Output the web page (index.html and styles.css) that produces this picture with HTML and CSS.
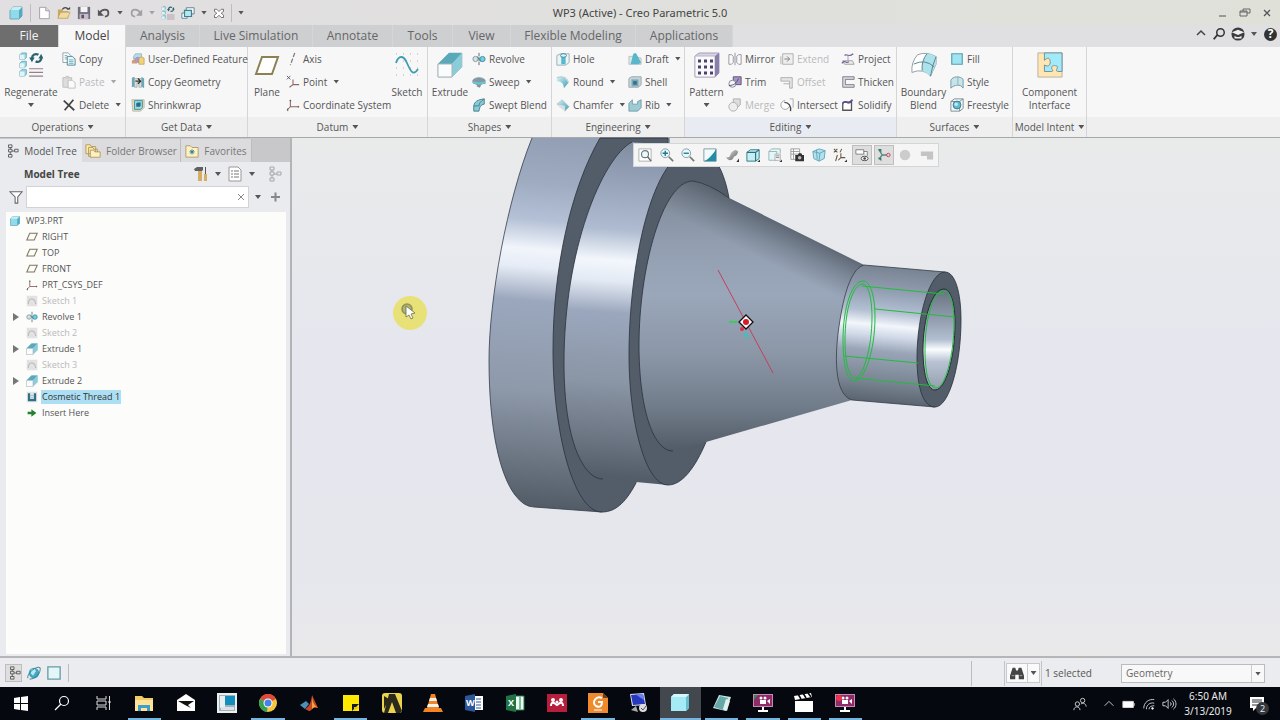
FILE: index.html
```html
<!DOCTYPE html>
<html lang="en">
<head>
<meta charset="utf-8">
<title>WP3 (Active) - Creo Parametric 5.0</title>
<link rel="stylesheet" href="styles.css">
</head>
<body>
<svg class="sprite" aria-hidden="true">
<defs>
<linearGradient id="teal" x1="0" y1="0" x2="1" y2="1"><stop offset="0" stop-color="#d5f3f8"/><stop offset="1" stop-color="#3d9db3"/></linearGradient>
<linearGradient id="brush" x1="0" y1="0" x2="1" y2="1"><stop offset="0" stop-color="#eee"/><stop offset="1" stop-color="#555"/></linearGradient>
<symbol id="cube" viewBox="0 0 16 16"><path d="M2 5 5 2h9v9l-3 3H2z" fill="#8fdbeb" stroke="#72a9b7"/><path d="M11 5l3-3v9l-3 3z" fill="#55a9bf"/><path d="M2 5l3-3h9l-3 3z" fill="#c7eef5"/></symbol>
<symbol id="new" viewBox="0 0 16 16"><path d="M3 1.500h7l4 4v9H3z" fill="#fff" stroke="#999"/><path d="M10 1.500v4h4" fill="#ddd" stroke="#999"/></symbol>
<symbol id="open" viewBox="0 0 16 16"><path d="M1 4h5l1 2h6v8H1z" fill="#c9a860"/><path d="M1 14l3-7h11l-3 7z" fill="#f1dba0" stroke="#b59855" stroke-width=".7"/><path d="M6 4c2-3 5-3 7 0" fill="none" stroke="#444" stroke-width="1.500"/><path d="M11 4h4V1z" fill="#444"/></symbol>
<symbol id="save" viewBox="0 0 16 16"><path d="M1 1h14v14H1z" fill="#706d7d"/><path d="M4 1h8v6H4z" fill="#f4f4f6"/><path d="M3 9h10v6H3z" fill="#cbb9cf"/><path d="M5 10h3v4H5z" fill="#555"/></symbol>
<symbol id="undo" viewBox="0 0 16 16"><path d="M3 8c3-5 10-5 10 0 0 2-1 4-4 4" fill="none" stroke="currentColor" stroke-width="2"/><path d="M1 4v7h7z" fill="currentColor"/></symbol>
<symbol id="regen" viewBox="0 0 26 28"><g fill="#8fd7e5" stroke="#6b9caa" stroke-width=".8"><path d="M1 3l2-2h5v5L6 8H1zM1 12l2-2h5v5l-2 2H1zM1 21l2-2h5v5l-2 2H1z"/></g><path d="M1 3h5v5H1zM1 12h5v5H1zM1 21h5v5H1z" fill="#dff5f8"/><path d="M14 7c0-4 4-6 7-4M24 5c1 4-3 7-6 5" fill="none" stroke="#2b6470" stroke-width="2.400"/><path d="M11 6h6l-3 5zM21 7h5l-2-5z" fill="#2b6470"/><path d="M11 18h15M11 22h15M11 26h15" stroke="#97808c" stroke-width="1.200"/></symbol>
<symbol id="windows" viewBox="0 0 16 16"><path d="M6 2h9v7H6zM1 8h6v6H1z" fill="#fff" stroke="#4b7e8c"/><path d="M4 5h8v7H4z" fill="#b6e7ef" stroke="#43808f" stroke-width="1.400"/></symbol>
<symbol id="closewin" viewBox="0 0 16 16"><path d="M2 3h3l3 3 3-3h3v3l-3 2 3 3v3h-3l-3-3-3 3H2v-3l3-3-3-2z" fill="#fff" stroke="#666" stroke-width="1.200"/></symbol>
<symbol id="copy" viewBox="0 0 16 16"><path d="M1 1h6l3 3v8H1z" fill="#fff" stroke="#8b9aa0"/><path d="M6 5h6l3 3v7H6z" fill="#e3f6fa" stroke="#4b7f8d"/><path d="M3 4h3M3 6h3M3 8h3M8 9h5M8 11h5M8 13h5" stroke="#5796a5" stroke-width=".8"/></symbol>
<symbol id="paste" viewBox="0 0 16 16"><path d="M1 3h10v11H1z" fill="#ddd" stroke="#bbb"/><path d="M4 1h4v3H4z" fill="#ccc"/><path d="M7 6h5l3 3v6H7z" fill="#fafafa" stroke="#bbb"/></symbol>
<symbol id="delete" viewBox="0 0 16 16"><path d="M2 3l12 11M13 2L3 14" stroke="#444" stroke-width="2" fill="none"/></symbol>
<symbol id="udf" viewBox="0 0 16 16"><path d="M3 5l2-3h7v6H3z" fill="#b6dceb" stroke="#71a5b8" stroke-width=".7"/><path d="M1 10l6-4v7H1z" fill="#d79b6d"/><circle cx="8" cy="9" r="3.500" fill="#ad98ca"/><path d="M9 12V7q3-3 6 0v7H9z" fill="#eed47b" stroke="#b29344" stroke-width=".7"/></symbol>
<symbol id="geom" viewBox="0 0 16 16"><path d="M1 3l3-1v11l-3 1zM12 2l3 2v11l-3-2z" fill="#68a9b4"/><path d="M4 4h8v10H9V9H7v5H4z" fill="#d8dddf" stroke="#8b999d" stroke-width=".7"/><path d="M5 7h5M8 4l3 3-3 3" stroke="#333" stroke-width="1.500" fill="none"/></symbol>
<symbol id="shrink" viewBox="0 0 16 16"><path d="M1 2h14v9l-4 4H2z" fill="#f2dd9c" stroke="#a7bac0"/><path d="M4 3h9v8l-2 2H4z" fill="#9bd8e6" stroke="#3b8ca0"/><path d="M6 6l2-1h3v4l-1 1H6z" fill="#256c82"/></symbol>
<symbol id="plane" viewBox="0 0 26 26"><path d="M8 5h16l-6 17H2z" fill="#fff" stroke="#8c8154" stroke-width="2"/></symbol>
<symbol id="axis" viewBox="0 0 16 16"><path d="M10 1L5 15" stroke="#777" stroke-width="1.400" stroke-dasharray="5 2"/></symbol>
<symbol id="csys" viewBox="0 0 16 16"><path d="M5 2v8h10M5 10l-4 4" fill="none" stroke="#8c6660" stroke-width="1.200"/><path d="M4 3h2M14 9v2M2 12v3" stroke="#555"/></symbol>
<symbol id="point" viewBox="0 0 16 16"><path d="M1 1l4 4M5 1L1 5" stroke="#555"/><path d="M8 5v6h7M8 11l-4 3" fill="none" stroke="#8c6660" stroke-width="1.200"/></symbol>
<symbol id="sketch" viewBox="0 0 26 26"><path d="M2 2h23M2 9h23M2 16h23M2 23h23" stroke="#c9a4a4" stroke-dasharray="1 6"/><path d="M2 11C5 2 10 4 13 11s6 14 11 6" fill="none" stroke="#3d9eb2" stroke-width="1.800"/></symbol>
<symbol id="extrude" viewBox="0 0 26 26"><path d="M1 12L12 1h13v14L15 25H1z" fill="#b9e1e9" stroke="#9fb7bd" stroke-width=".7"/><path d="M12 1h13L15 12H1z" fill="#59a9bb"/><path d="M25 1v14L15 25V12z" fill="#8ccbd8"/><path d="M1 12h14v13H1z" fill="#fbfcfc" stroke="#a8b5b9"/></symbol>
<symbol id="revolve" viewBox="0 0 16 16"><circle cx="4" cy="8" r="3" fill="#d4e0e2" stroke="#81969d"/><circle cx="12" cy="8" r="3" fill="#71cfe2" stroke="#3a889c"/><path d="M8 1v14" stroke="#555" stroke-dasharray="4 1"/><path d="M6 5l4 6" stroke="#32899f"/></symbol>
<symbol id="sweep" viewBox="0 0 16 16"><path d="M1 6c2-4 12-4 14 0v4c-3-1-5 0-6 4l-3-1v-2l-5-2z" fill="#809ba2" stroke="#6c858e" stroke-width=".7"/><path d="M1 7c4 1 9 2 14 0v2c-4 3-8 2-14 0z" fill="#6bc4d4"/></symbol>
<symbol id="blend" viewBox="0 0 16 16"><path d="M2 15V9c1-5 4-7 12-8v6c-4 1-5 2-6 8z" fill="#8acbd8" stroke="#427986"/><path d="M2 9h6c0-3 2-5 6-8" stroke="#427986" fill="none"/></symbol>
<symbol id="hole" viewBox="0 0 16 16"><path d="M1 4l4-2h10v10l-4 3H1z" fill="#eef4f5" stroke="#91abb2"/><path d="M6 4h5v10H6z" fill="#55bad0"/><ellipse cx="8.500" cy="4" rx="3.500" ry="2" fill="#d8f5fa" stroke="#397f91"/></symbol>
<symbol id="round" viewBox="0 0 16 16"><path d="M1 3c7-2 11 1 13 6l-5 6c0-5-3-8-8-8z" fill="url(#teal)"/><path d="M1 3l4-1c6 0 9 3 9 7" fill="none" stroke="#aebdc0"/></symbol>
<symbol id="chamfer" viewBox="0 0 16 16"><path d="M1 7l6-5 8 8-5 5V9z" fill="url(#teal)" stroke="#a6bfc3" stroke-width=".7"/><path d="M1 8l9 1v6" fill="#d9dfe1"/></symbol>
<symbol id="draft" viewBox="0 0 16 16"><path d="M1 5h7l7 2v7H1z" fill="#dfe7e8" stroke="#9babae" stroke-width=".7"/><path d="M6 2l3-1 6 11-3 2H3z" fill="#59b6cb"/></symbol>
<symbol id="shell" viewBox="0 0 16 16"><path d="M1 4l3-2h11v9l-3 3H1z" fill="#c6d4d8" stroke="#94a5ab"/><path d="M4 5h8v8H4z" fill="#78a8b7"/><path d="M6 7h4v4H6z" fill="#2f718b"/></symbol>
<symbol id="rib" viewBox="0 0 16 16"><path d="M1 6l4-4v5h6V4l4-2v9l-4 4H1z" fill="#9fcbd4" stroke="#598e9b" stroke-width=".8"/></symbol>
<symbol id="pattern" viewBox="0 0 26 26"><path d="M1 4l4-3h20v20l-4 4H1z" fill="#d8d3e4" stroke="#a59fb8"/><path d="M1 4h20v21H1z" fill="#faf9fc" stroke="#bbb6c6"/><path d="M21 4l4-3v20l-4 4z" fill="#8a7eaa"/><path d="M4 9h15M4 15h15M4 21h15" stroke="#4a426c" stroke-width="3" stroke-dasharray="3 3"/></symbol>
<symbol id="mirror" viewBox="0 0 16 16"><path d="M1 3h3l2 2v7l-2 2H1zM15 3h-3l-2 2v7l2 2h3zM8 1v14" fill="#fafafa" stroke="#8f8d96"/></symbol>
<symbol id="trim" viewBox="0 0 16 16"><path d="M6 2h9v9H6z" fill="#a493c6" stroke="#594e70"/><circle cx="5" cy="10" r="4" fill="#f7f7fa" stroke="#817c8b"/><path d="M1 12c6 0 9-3 11-8" fill="none" stroke="#51416f"/></symbol>
<symbol id="merge" viewBox="0 0 16 16"><path d="M6 1h8v7l-5 4H6z" fill="#ddd" stroke="#aaa"/><circle cx="6" cy="10" r="5" fill="#eee" stroke="#aaa"/></symbol>
<symbol id="extend" viewBox="0 0 16 16"><path d="M3 2h12v12H3zM1 5v9" fill="#eee" stroke="#aaa"/><path d="M5 8h6M8 5l3 3-3 3" fill="none" stroke="#777"/></symbol>
<symbol id="offset" viewBox="0 0 16 16"><path d="M1 3h13v12h-3V7H1zM4 10h7" fill="#e5e5e5" stroke="#aaa"/></symbol>
<symbol id="intersect" viewBox="0 0 16 16"><path d="M11 1h4v10" fill="none" stroke="#aaa"/><path d="M6 3a5 5 0 1 0 5 5" fill="#fff" stroke="#999"/><path d="M5 5c5 0 8 4 7 10" fill="none" stroke="#494255" stroke-width="1.500"/></symbol>
<symbol id="project" viewBox="0 0 16 16"><path d="M2 10h11l2 4H4z" fill="#eee" stroke="#999"/><path d="M1 13c3-5 5 1 8-2M4 4c2-3 4 3 10-2" fill="none" stroke="#725a98" stroke-width="1.300"/><path d="M8 4v6" stroke="#999"/></symbol>
<symbol id="thicken" viewBox="0 0 16 16"><path d="M15 2H2v12h13v-3H5V5h10z" fill="#ddd9e3" stroke="#77737c"/></symbol>
<symbol id="solidify" viewBox="0 0 16 16"><path d="M2 14V6c3-5 7 3 10-2v10z" fill="#fff" stroke="#555" stroke-width="1.500"/><path d="M2 6c3-5 7 3 11-4" fill="none" stroke="#62488c" stroke-width="2"/></symbol>
<symbol id="boundary" viewBox="0 0 28 28"><path d="M7 3Q17-1 27 5L27 13 21 26Q13 17 1 22 0 11 7 3z" fill="#fff" stroke="#8a9ba0"/><path d="M17 2Q23 2 27 5L27 13 21 26 12 20Q11 10 17 2z" fill="#aee2eb"/><path d="M3 13q12-6 22 3M17 2Q11 10 12 20M27 5Q23 14 21 26" fill="none" stroke="#54818d"/></symbol>
<symbol id="fill" viewBox="0 0 16 16"><path d="M2 2h12v12H2z" fill="#a1e4f1" stroke="#529fae" stroke-width="1.300"/></symbol>
<symbol id="style" viewBox="0 0 16 16"><path d="M1 6c2-5 11-5 14-1v10c-3-5-10-4-14 0z" fill="#c7e4eb" stroke="#6b929e"/><path d="M9 2v9" stroke="#88aeb8"/></symbol>
<symbol id="freestyle" viewBox="0 0 16 16"><path d="M1 4l4-3h10v11l-4 3H1zM1 4h10v11M11 4l4-3" fill="none" stroke="#76868b"/><circle cx="8" cy="8" r="4.500" fill="#65bace" stroke="#30798e"/><circle cx="7" cy="7" r="2" fill="#bdeaf2"/></symbol>
<symbol id="component" viewBox="0 0 28 28"><path d="M1 1h26v26H1z" fill="#ffe6b2" stroke="#b8afa0"/><path d="M8 1h19v20h-5c-3-1 2-5-1-6s-6 0-5 3c1 2 2 3-1 3H8v-7c5 3 7-1 6-5s-4-2-6 0z" fill="#a2eafa" stroke="#718d93"/></symbol>
<symbol id="search" viewBox="0 0 16 16"><circle cx="10" cy="6" r="5" fill="none" stroke="currentColor" stroke-width="2"/><path d="M6 9l-5 6" stroke="currentColor" stroke-width="2.500"/></symbol>
<symbol id="cap" viewBox="0 0 16 16"><circle cx="8" cy="8" r="7.500" fill="#3c3c3c"/><path d="M1 6l7-3 7 3-7 3zM4 10c2 2 6 2 8 0v3H4z" fill="#eee"/></symbol>
<symbol id="tree" viewBox="0 0 16 16"><path d="M4 1h4v3H4zM4 6h4v3H4zM4 12h4v3H4zM11 6h4v3h-4zM6 4v2M6 9v3M8 8h3" fill="none" stroke="currentColor"/></symbol>
<symbol id="folders" viewBox="0 0 18 16"><path d="M1 1h5l1 2h5v8H1zM4 4h5l1 2h4v8H4z" fill="#ffe8a6" stroke="#ae975f"/><path d="M6 7h4l1 2h6v6H6z" fill="#fff1c2" stroke="#ae975f"/></symbol>
<symbol id="favorite" viewBox="0 0 16 16"><path d="M1 2h5l2 2h7v11H1z" fill="#fff1c2" stroke="#a5976e"/><path d="M8 6v6M5 9h6M6 7l4 4M10 7l-4 4" stroke="#27768a"/></symbol>
<symbol id="tools" viewBox="0 0 16 16"><path d="M5 4h4v11H5z" fill="#d5ad65"/><path d="M1 3l3-2h6v3L9 5H2z" fill="#606060"/><path d="M12 1h1v7h-1z" fill="#555"/><path d="M11 8h3v7h-3z" fill="#d5ad65"/></symbol>
<symbol id="list" viewBox="0 0 16 16"><path d="M2 1h9l3 3v11H2z" fill="#fff" stroke="#999"/><path d="M4 5h2M7 5h5M4 8h2M7 8h5M4 11h2M7 11h5" stroke="#777" stroke-width="1.200"/></symbol>
<symbol id="filter" viewBox="0 0 16 16"><path d="M1 2h14l-5 6v7H7V8z" fill="#fff" stroke="#666" stroke-width="1.200"/></symbol>
<symbol id="datum" viewBox="0 0 16 16"><path d="M5 3h10l-4 9H1z" fill="none" stroke="#7e7559" stroke-width="1.400"/></symbol>
<symbol id="sketchoff" viewBox="0 0 16 16"><path d="M1 1h14v14H1z" fill="#e2e2e2"/><path d="M3 12c0-9 9-9 10 0" fill="none" stroke="#bbb" stroke-width="1.500"/></symbol>
<symbol id="thread" viewBox="0 0 16 16"><path d="M1 1h14v14H1z" fill="#dfe6ea"/><path d="M4 3v9h8V3" fill="none" stroke="#316f83" stroke-width="3"/><path d="M6 6h4M6 9h4" stroke="#8ab7c5"/></symbol>
<symbol id="insert" viewBox="0 0 16 16"><path d="M1 6h6V2l8 6-8 6v-4H1z" fill="#23822d"/></symbol>
<symbol id="zoomin" viewBox="0 0 16 16"><circle cx="6" cy="6" r="5" fill="#e5fafd" stroke="#7f9296"/><path d="M10 10l5 5" stroke="#777" stroke-width="2"/><path d="M3 6h6M6 3v6" stroke="#1d7587" stroke-width="1.500"/></symbol>
<symbol id="zoomout" viewBox="0 0 16 16"><circle cx="6" cy="6" r="5" fill="#e5fafd" stroke="#7f9296"/><path d="M10 10l5 5" stroke="#777" stroke-width="2"/><path d="M3 6h6" stroke="#1d7587" stroke-width="1.500"/></symbol>
<symbol id="refit" viewBox="0 0 16 16"><path d="M1 1h14v14H1z" fill="#fff" stroke="#aaa"/><circle cx="8" cy="7" r="4" fill="#eef8fa" stroke="#667d84" stroke-width="1.300"/><path d="M11 10l4 5" stroke="#666" stroke-width="1.600"/></symbol>
<symbol id="repaint" viewBox="0 0 16 16"><path d="M1 1h14v14H1z" fill="#effcff" stroke="#829095"/><path d="M15 1v14H1c5-2 10-7 14-14z" fill="#238ba3"/></symbol>
<symbol id="render" viewBox="0 0 16 16"><path d="M1 10q4 2 5-2t6-6l3 2q-1 5-5 6-1 4-5 4-3-1-4-4z" fill="url(#brush)"/><path d="M16 12v4h-3z" fill="#333"/></symbol>
<symbol id="saved" viewBox="0 0 16 16"><path d="M1 5l4-3h10v10l-4 3H1z" fill="#c6eef4" stroke="#27707e"/><path d="M1 5h10v10M11 5l4-3" fill="none" stroke="#27707e" stroke-width="1.300"/><path d="M16 13v3h-3z" fill="#333"/></symbol>
<symbol id="views" viewBox="0 0 16 16"><path d="M1 4l3-3h10v5M1 4h9v10H1z" fill="#e4f6f8" stroke="#91b0b5"/><path d="M8 7h6v7H8z" fill="#fff" stroke="#aaa"/><path d="M9 9h4M9 11h4" stroke="#777"/><path d="M16 13v3h-3z" fill="#333"/></symbol>
<symbol id="camera" viewBox="0 0 16 16"><path d="M1 1h10v12H1zM1 4h10M1 7h10M4 1v12" fill="#fff" stroke="#999"/><path d="M6 8h3l1-2h3l1 2h2v7H6z" fill="#333"/><circle cx="11" cy="11" r="2" fill="#bbb"/></symbol>
<symbol id="section" viewBox="0 0 16 16"><path d="M1 4l7-3 7 2-1 9-6 3-6-3z" fill="#b1e1ef" stroke="#5fa1b5"/><path d="M1 4l8 2 6-3M9 6l-1 9M5 2l1 11" fill="none" stroke="#5fa1b5"/></symbol>
<symbol id="datums" viewBox="0 0 16 16"><path d="M1 1l4 4M5 1L1 5M10 1L8 5M5 8l-2 7M9 6v5h5M9 11l-3 3" fill="none" stroke="#67573f" stroke-width="1.200"/><path d="M16 13v3h-3z" fill="#333"/></symbol>
<symbol id="annot" viewBox="0 0 16 16"><path d="M1 2h9v5H1zM10 4h4v5" fill="#fff" stroke="#777"/><ellipse cx="11" cy="12" rx="4" ry="2.500" fill="#fff" stroke="#444"/><circle cx="11" cy="12" r="1.500" fill="#444"/></symbol>
<symbol id="spin" viewBox="0 0 16 16"><path d="M2 2l4 6-4 5M6 8h6" stroke="#56857d" stroke-width="1.500" fill="none"/><path d="M1 1h4v4zM1 11h4v4z" fill="#357b70"/><circle cx="13" cy="8" r="2" fill="#f0c6c8" stroke="#b34c57"/></symbol>
</defs>
</svg>

<header class="titlebar">
  <div class="quick">
    <svg class="i16"><use href="#cube"/></svg><span class="rule"></span>
    <button aria-label="New"><svg class="i14"><use href="#new"/></svg></button>
    <button aria-label="Open"><svg class="i14"><use href="#open"/></svg></button>
    <button aria-label="Save"><svg class="i14"><use href="#save"/></svg></button>
    <button aria-label="Undo"><svg class="i14"><use href="#undo"/></svg></button><i class="caret"></i>
    <button aria-label="Redo" class="faded"><svg class="i14 flip"><use href="#undo"/></svg></button><i class="caret faded"></i>
    <button aria-label="Regenerate"><svg class="i14"><use href="#regen"/></svg></button>
    <button aria-label="Windows"><svg class="i14"><use href="#windows"/></svg></button><i class="caret"></i>
    <button aria-label="Close window"><svg class="i12"><use href="#closewin"/></svg></button><span class="rule"></span>
    <button aria-label="Customize toolbar" class="customize"><i class="caret"></i></button>
  </div>
  <h1>WP3 (Active) - Creo Parametric 5.0</h1>
  <div class="winctl">
    <button aria-label="Minimize"><svg class="i12" viewBox="0 0 12 12"><path d="M2 9h7" stroke="#555"/></svg></button>
    <button aria-label="Restore"><svg class="i12" viewBox="0 0 12 12"><path d="M4 4V2h7v4H8M1 4h7v5H1zM1 5h7" fill="none" stroke="#666"/></svg></button>
    <button aria-label="Close"><svg class="i12" viewBox="0 0 12 12"><path d="M3 3l6 6M9 3L3 9" stroke="#555" stroke-width="1.300"/></svg></button>
  </div>
</header>

<nav class="tabs">
  <button class="file">File</button><button class="active">Model</button><button class="t-analysis">Analysis</button><button class="t-live">Live Simulation</button><button class="t-annotate">Annotate</button><button class="t-tools">Tools</button><button class="t-view">View</button><button class="t-flex">Flexible Modeling</button><button class="t-apps">Applications</button>
  <div class="help">
    <button aria-label="Collapse ribbon"><svg class="i12" viewBox="0 0 12 12"><path d="M2 7l4-4 4 4" fill="none" stroke="#444" stroke-width="1.500"/></svg></button>
    <button aria-label="Search commands"><svg class="i12"><use href="#search"/></svg></button>
    <button aria-label="Learning"><svg class="i14"><use href="#cap"/></svg></button><i class="caret"></i>
    <button aria-label="Help" class="qmark">?</button>
  </div>
</nav>

<section class="ribbon">
  <div class="group g-oper"><div class="cmds">
    <button class="big"><svg class="i26"><use href="#regen"/></svg><span>Regenerate</span><i class="caret"></i></button>
    <div class="col"><button><svg class="i14"><use href="#copy"/></svg>Copy</button><button class="off"><svg class="i14"><use href="#paste"/></svg>Paste<i class="caret"></i></button><button><svg class="i14"><use href="#delete"/></svg>Delete<i class="caret"></i></button></div>
  </div><button class="label">Operations<i class="caret"></i></button></div>
  <div class="group g-data"><div class="cmds">
    <div class="col"><button><svg class="i14"><use href="#udf"/></svg>User-Defined Feature</button><button><svg class="i14"><use href="#geom"/></svg>Copy Geometry</button><button><svg class="i14"><use href="#shrink"/></svg>Shrinkwrap</button></div>
  </div><button class="label">Get Data<i class="caret"></i></button></div>
  <div class="group g-datum"><div class="cmds">
    <button class="big"><svg class="i26"><use href="#plane"/></svg><span>Plane</span></button>
    <div class="col"><button><svg class="i14"><use href="#axis"/></svg>Axis</button><button><svg class="i14"><use href="#point"/></svg>Point<i class="caret"></i></button><button><svg class="i14"><use href="#csys"/></svg>Coordinate System</button></div>
    <button class="big"><svg class="i26"><use href="#sketch"/></svg><span>Sketch</span></button>
  </div><button class="label">Datum<i class="caret"></i></button></div>
  <div class="group g-shapes"><div class="cmds">
    <button class="big"><svg class="i26"><use href="#extrude"/></svg><span>Extrude</span></button>
    <div class="col"><button><svg class="i14"><use href="#revolve"/></svg>Revolve</button><button><svg class="i14"><use href="#sweep"/></svg>Sweep<i class="caret"></i></button><button><svg class="i14"><use href="#blend"/></svg>Swept Blend</button></div>
  </div><button class="label">Shapes<i class="caret"></i></button></div>
  <div class="group g-eng"><div class="cmds">
    <div class="col"><button><svg class="i14"><use href="#hole"/></svg>Hole</button><button><svg class="i14"><use href="#round"/></svg>Round<i class="caret"></i></button><button><svg class="i14"><use href="#chamfer"/></svg>Chamfer<i class="caret"></i></button></div>
    <div class="col"><button><svg class="i14"><use href="#draft"/></svg>Draft<i class="caret"></i></button><button><svg class="i14"><use href="#shell"/></svg>Shell</button><button><svg class="i14"><use href="#rib"/></svg>Rib<i class="caret"></i></button></div>
  </div><button class="label">Engineering<i class="caret"></i></button></div>
  <div class="group g-edit"><div class="cmds">
    <button class="big"><svg class="i26"><use href="#pattern"/></svg><span>Pattern</span><i class="caret"></i></button>
    <div class="col"><button><svg class="i14"><use href="#mirror"/></svg>Mirror</button><button><svg class="i14"><use href="#trim"/></svg>Trim</button><button class="off"><svg class="i14"><use href="#merge"/></svg>Merge</button></div>
    <div class="col"><button class="off"><svg class="i14"><use href="#extend"/></svg>Extend</button><button class="off"><svg class="i14"><use href="#offset"/></svg>Offset</button><button><svg class="i14"><use href="#intersect"/></svg>Intersect</button></div>
    <div class="col"><button><svg class="i14"><use href="#project"/></svg>Project</button><button><svg class="i14"><use href="#thicken"/></svg>Thicken</button><button><svg class="i14"><use href="#solidify"/></svg>Solidify</button></div>
  </div><button class="label">Editing<i class="caret"></i></button></div>
  <div class="group g-surf"><div class="cmds">
    <button class="big"><svg class="i26"><use href="#boundary"/></svg><span>Boundary<br>Blend</span></button>
    <div class="col"><button><svg class="i14"><use href="#fill"/></svg>Fill</button><button><svg class="i14"><use href="#style"/></svg>Style</button><button><svg class="i14"><use href="#freestyle"/></svg>Freestyle</button></div>
  </div><button class="label">Surfaces<i class="caret"></i></button></div>
  <div class="group g-intent"><div class="cmds">
    <button class="big"><svg class="i26"><use href="#component"/></svg><span>Component<br>Interface</span></button>
  </div><button class="label">Model Intent<i class="caret"></i></button></div>
  <div class="group rest"><div class="cmds"></div><div class="label"></div></div>
</section>

<main>
  <aside>
    <div class="sidetabs">
      <button class="on"><svg class="i14"><use href="#tree"/></svg>Model Tree</button>
      <button><svg class="i16"><use href="#folders"/></svg>Folder Browser</button>
      <button><svg class="i14"><use href="#favorite"/></svg>Favorites</button>
    </div>
    <div class="sidehead"><h2>Model Tree</h2>
      <button aria-label="Settings"><svg class="i16"><use href="#tools"/></svg></button><i class="caret"></i>
      <button aria-label="Show"><svg class="i16"><use href="#list"/></svg></button><i class="caret"></i>
      <button aria-label="Hide tree" class="faded hide"><svg class="i16"><use href="#tree"/></svg></button>
    </div>
    <div class="find"><svg class="i14"><use href="#filter"/></svg>
      <div class="field"><input type="text" aria-label="Filter tree"><button aria-label="Clear"><svg class="i8" viewBox="0 0 8 8"><path d="M1 1l6 6M7 1L1 7" stroke="#888"/></svg></button></div>
      <i class="caret"></i><button class="plus" aria-label="Add"><svg class="i12" viewBox="0 0 12 12"><path d="M2 6h9M6.500 1.500v9" stroke="#888" stroke-width="2"/></svg></button>
    </div>
    <ul class="treelist">
      <li class="root"><svg class="i12"><use href="#cube"/></svg><span>WP3.PRT</span></li>
      <li><svg class="i12"><use href="#datum"/></svg><span>RIGHT</span></li>
      <li><svg class="i12"><use href="#datum"/></svg><span>TOP</span></li>
      <li><svg class="i12"><use href="#datum"/></svg><span>FRONT</span></li>
      <li><svg class="i12"><use href="#csys"/></svg><span>PRT_CSYS_DEF</span></li>
      <li class="off"><svg class="i12"><use href="#sketchoff"/></svg><span>Sketch 1</span></li>
      <li><button class="exp" aria-label="Expand Revolve 1"></button><svg class="i12"><use href="#revolve"/></svg><span>Revolve 1</span></li>
      <li class="off"><svg class="i12"><use href="#sketchoff"/></svg><span>Sketch 2</span></li>
      <li><button class="exp" aria-label="Expand Extrude 1"></button><svg class="i12"><use href="#extrude"/></svg><span>Extrude 1</span></li>
      <li class="off"><svg class="i12"><use href="#sketchoff"/></svg><span>Sketch 3</span></li>
      <li><button class="exp" aria-label="Expand Extrude 2"></button><svg class="i12"><use href="#extrude"/></svg><span>Extrude 2</span></li>
      <li class="sel"><svg class="i12"><use href="#thread"/></svg><span>Cosmetic Thread 1</span></li>
      <li><svg class="i10"><use href="#insert"/></svg><span>Insert Here</span></li>
    </ul>
  </aside>

  <section class="canvas">
    <svg class="model" viewBox="292 138 988 518" preserveAspectRatio="xMidYMin meet" role="img" aria-label="WP3 part">
      <defs>
        <linearGradient id="c1" gradientUnits="userSpaceOnUse" x1="540" y1="138" x2="510" y2="507">
          <stop offset="0" stop-color="#939fb4"/><stop offset=".12" stop-color="#9eabc1"/><stop offset=".22" stop-color="#b3c0d5"/><stop offset=".3" stop-color="#f1f5fb"/><stop offset=".35" stop-color="#e6ecf6"/><stop offset=".44" stop-color="#9ba7bd"/><stop offset=".68" stop-color="#8e99aa"/><stop offset=".86" stop-color="#6d7784"/><stop offset="1" stop-color="#515b66"/></linearGradient>
        <linearGradient id="c2" gradientUnits="userSpaceOnUse" x1="610" y1="138" x2="586" y2="485">
          <stop offset="0" stop-color="#808b9f"/><stop offset=".14" stop-color="#98a5bb"/><stop offset=".26" stop-color="#aebbd0"/><stop offset=".35" stop-color="#f3f7fc"/><stop offset=".41" stop-color="#e3eaf4"/><stop offset=".5" stop-color="#9ba7bd"/><stop offset=".7" stop-color="#8a95a5"/><stop offset=".88" stop-color="#68727f"/><stop offset=".97" stop-color="#535d69"/></linearGradient>
        <linearGradient id="cone" gradientUnits="userSpaceOnUse" x1="750" y1="190" x2="750" y2="450">
          <stop offset="0" stop-color="#7e8998"/><stop offset=".2" stop-color="#929eb0"/><stop offset=".4" stop-color="#9aa7ba"/><stop offset=".62" stop-color="#8c98a8"/><stop offset=".83" stop-color="#727d8b"/><stop offset="1" stop-color="#525c67"/></linearGradient>
        <linearGradient id="edge" gradientUnits="userSpaceOnUse" x1="797" y1="232" x2="779" y2="268"><stop offset="0" stop-color="#535c68" stop-opacity=".8"/><stop offset="1" stop-color="#65707e" stop-opacity="0"/></linearGradient>
        <linearGradient id="c3" gradientUnits="userSpaceOnUse" x1="900" y1="268" x2="887" y2="404">
          <stop offset="0" stop-color="#788392"/><stop offset=".18" stop-color="#929eb1"/><stop offset=".33" stop-color="#b3bfd2"/><stop offset=".43" stop-color="#f3f6fb"/><stop offset=".51" stop-color="#d0d9e7"/><stop offset=".62" stop-color="#99a4b7"/><stop offset=".83" stop-color="#7c8795"/><stop offset="1" stop-color="#59636f"/></linearGradient>
        <linearGradient id="bore" x1="0" y1="0" x2="0" y2="1"><stop offset="0" stop-color="#67717e"/><stop offset=".3" stop-color="#929eb0"/><stop offset=".5" stop-color="#b2bfd1"/><stop offset=".6" stop-color="#fafdff"/><stop offset=".72" stop-color="#b8c2d2"/><stop offset="1" stop-color="#929eae"/></linearGradient>
      </defs>
      <path d="M532 138C507 200 489 300 489 360C489 430 500 475 515 495Q524 507 534 507L602 512L670 142V138Z" fill="url(#c1)"/>
      <path d="M532 138C507 200 489 300 489 360C489 430 500 475 515 495Q524 507 534 507L602 512" fill="none" stroke="#343d49" stroke-width=".8"/>
      <path d="M600 138C570 190 553 270 553 350C553 430 573 512 602 512C617 512 627 500 636 483L668 142V138Z" fill="#535d69" stroke="#28303a" stroke-width=".8"/>
      <path d="M632 142C602 158 564 250 564 363C564 440 583 479 603 479L636 482L668 485L700 148Z" fill="url(#c2)"/>
      <path d="M632 142C602 158 564 250 564 363C564 440 583 479 603 479" fill="none" stroke="#28303a" stroke-width=".8"/>
      <path d="M668 485C645 485 629 420 629 355C629 270 650 150 697 147C715 150 725 175 729 198L706 442C695 468 682 485 668 485Z" fill="#535d69" stroke="#28303a" stroke-width=".8"/>
      <path d="M693 181C662 181 639 270 639 345C639 405 652 451 673 451L706 442L852 400L864 265L729 198C716 190 704 181 693 181Z" fill="url(#cone)"/>
      <path d="M693 181C662 181 639 270 639 345C639 405 652 451 673 451L706 442L852 400L864 265L729 198C716 190 704 181 693 181Z" fill="url(#edge)"/>
      <path d="M693 181C662 181 639 270 639 345C639 405 652 451 673 451M693 181Q708 183 729 198" fill="none" stroke="#28303a" stroke-width=".8"/>
      <path d="M864 265L945 272V350L935 407L852 400C834 395 834 355 840 320C845 288 853 268 864 265Z" fill="url(#c3)" stroke="#343c47" stroke-width=".8"/>
      <path d="M945 272C955 272 961 292 961 320C961 365 949 407 935 407C924 407 917 390 917 358C917 315 930 272 945 272Z" fill="#535d69" stroke="#28303a" stroke-width=".8"/>
      <path d="M944 289C951 289 955 304 955 323C955 357 946 390 935 390C927 390 923 372 923 350C923 318 932 289 944 289Z" fill="url(#bore)" stroke="#252c34"/>
      <g fill="none" stroke="#20bd3d"><path d="M863 281C870 281 875 295 875 317C875 350 865 381 854 381C847 381 843 364 843 340C843 307 852 281 863 281Z"/><path d="M863 284C868 284 872 298 872 317C872 348 863 378 855 378C849 378 845 362 845 340C845 309 853 284 863 284Z"/><path d="M862 286L944 294M875 309L955 317M844 356L918 363M855 378L935 386"/><path d="M944 291C951 291 954 305 954 323C954 356 945 388 936 388C928 388 925 370 925 350C925 319 933 291 944 291Z"/></g>
      <path d="M718 270L773 373" stroke="#c63e5c"/><path d="M729 321h8v2h-8z" fill="#39cf55"/><path d="M745 332l5 5h-6z" fill="#35c5bd"/><circle cx="742" cy="329" r="2" fill="#ed2645"/>
      <path d="M746 315l7 7-7 7-7-7z" fill="#fff" stroke="#111" stroke-width="1.300"/><circle cx="746" cy="322" r="3" fill="#dc1826"/>
      <circle cx="410" cy="313" r="17" fill="#e8e178"/><circle cx="407" cy="309" r="5" fill="#b2b56a" stroke="#8d9157" stroke-width="1.500"/><path d="M406 306v11l3-2 2 4 2-1-2-4 4-1z" fill="#fff" stroke="#686c50" stroke-width=".8"/>
    </svg>
    <div class="viewtools">
      <button aria-label="Refit"><svg class="i14"><use href="#refit"/></svg></button><button aria-label="Zoom in"><svg class="i14"><use href="#zoomin"/></svg></button><button aria-label="Zoom out"><svg class="i14"><use href="#zoomout"/></svg></button><button aria-label="Repaint"><svg class="i14"><use href="#repaint"/></svg></button><button aria-label="Render"><svg class="i14"><use href="#render"/></svg></button><button aria-label="Display style"><svg class="i14"><use href="#saved"/></svg></button><button aria-label="Saved views"><svg class="i14"><use href="#views"/></svg></button><button aria-label="View manager"><svg class="i14"><use href="#camera"/></svg></button><button aria-label="Perspective"><svg class="i14"><use href="#section"/></svg></button><button aria-label="Datum display"><svg class="i14"><use href="#datums"/></svg></button><button aria-label="Annotation display" class="down"><svg class="i14"><use href="#annot"/></svg></button><button aria-label="Spin center" class="down"><svg class="i14"><use href="#spin"/></svg></button><button aria-label="Pause"><svg class="i14" viewBox="0 0 16 16"><circle cx="8" cy="8" r="6" fill="#ccc"/></svg></button><button aria-label="Simulation"><svg class="i14" viewBox="0 0 16 16"><path d="M1 4h14v9H8V9H1z" fill="#c4c4c4"/></svg></button>
    </div>
  </section>
</main>

<footer class="status">
  <button class="down" aria-label="Model tree"><svg class="i14"><use href="#tree"/></svg></button>
  <button aria-label="Browser"><svg class="i14" viewBox="0 0 16 16"><circle cx="8" cy="8" r="6" fill="#41a8c5"/><path d="M5 4l4-1 1 3-3 5-3-3z" fill="#b7eaf0"/><path d="M1 14C-1 9 11-1 15 2M3 15c7 0 13-7 12-13" fill="none" stroke="#387080"/></svg></button>
  <button aria-label="Full screen"><svg class="i14" viewBox="0 0 16 16"><path d="M1 1h14v14H1z" fill="#e3f6f8" stroke="#679aa2" stroke-width="1.500"/></svg></button>
  <span class="rule"></span><span class="spacer"></span><span class="rule tall"></span>
  <div class="finder"><button aria-label="Find"><svg class="i14" viewBox="0 0 16 16"><path d="M3 2h3l1 3h2l1-3h3l3 9v4h-6v-5H6v5H0v-4z" fill="#454545"/><path d="M2 11h3M11 11h3" stroke="#aaa"/></svg></button><button aria-label="Find options"><i class="caret"></i></button></div>
  <span class="count">1 selected</span>
  <div class="pick"><select aria-label="Selection filter"><option>Geometry</option></select><i class="caret"></i></div>
</footer>

<nav class="taskbar" aria-label="Taskbar">
  <div class="apps">
    <button aria-label="Start"><svg viewBox="0 0 20 20"><path d="M3 5l6-1v6H3zM10 4l7-1v7h-7zM3 11h6v6l-6-1zM10 11h7v7l-7-1z" fill="#fff"/></svg></button>
    <button aria-label="Search"><svg viewBox="0 0 20 20"><circle cx="12" cy="8" r="4.500" fill="none" stroke="#fff" stroke-width="1.200"/><path d="M9 11l-6 6" stroke="#fff" stroke-width="1.200"/></svg></button>
    <button aria-label="Task view"><svg viewBox="0 0 20 20"><path d="M4 3v3h9V3M4 17v-3h9v3M4 8h9v4H4zM16.500 3v14M15 9h3" fill="none" stroke="#ddd"/></svg></button>
    <button class="run" aria-label="File Explorer"><svg viewBox="0 0 20 20"><path d="M1 3h7l2 2h9v13H1z" fill="#f2cc65"/><path d="M1 7h18v11H1z" fill="#ffe398"/><path d="M4 12h12v6h-3v-3H7v3H4z" fill="#3ba1cb"/></svg></button>
    <button aria-label="Mail"><svg viewBox="0 0 20 20"><path d="M1 7l9-6 9 6v11H1z" fill="#fff"/><path d="M2 8h16l-6 4 3 3-6-3z" fill="#111"/></svg></button>
    <button aria-label="Remote panel"><svg viewBox="0 0 20 20"><path d="M0 0h20v20H0z" fill="#eee"/><path d="M2 2h16v16H2z" fill="#9db3bd"/><path d="M3 3h5v12H3z" fill="#e9eef1"/><path d="M8 3h10v9H8z" fill="#148dbd"/><path d="M4 14h13v3H4z" fill="#dce1e3"/></svg></button>
    <button class="run" aria-label="Chrome"><svg viewBox="0 0 20 20"><circle cx="10" cy="10" r="9" fill="#f6c63c"/><path d="M10 10L2 6a9 9 0 0 1 16 0z" fill="#df493c"/><path d="M10 10l-1 9A9 9 0 0 1 2 6z" fill="#35a253"/><circle cx="10" cy="10" r="4.500" fill="#fff"/><circle cx="10" cy="10" r="3.500" fill="#4484e8"/></svg></button>
    <button aria-label="Matlab"><svg viewBox="0 0 20 20"><path d="M1 12l6-4 3 3-4 5z" fill="#4c91b5"/><path d="M7 8l6-6 6 13c-5-3-6 3-9 3l-4-2c4-2 6-6 7-14z" fill="#c64725"/><path d="M13 2c0 7 2 10 6 13-3-1-4-1-6 1z" fill="#f7a33a"/></svg></button>
    <button class="run" aria-label="Sticky Notes"><svg viewBox="0 0 20 20"><path d="M2 2h16v16H2z" fill="#ffe900"/><path d="M11 18v-7h7z" fill="#161a24"/><path d="M13 14h5l-5 4z" fill="#e5cd00"/></svg></button>
    <button aria-label="Simulation"><svg viewBox="0 0 20 20"><path d="M0 3q0-3 3-3h14q3 0 3 3v14q0 3-3 3H3q-3 0-3-3z" fill="#ecd34e"/><path d="M2 3l5 3-5 10zM7 1h6l7 17-2 2h-4L10 9 6 20H2z" fill="#2c291b"/></svg></button>
    <button aria-label="VLC"><svg viewBox="0 0 20 20"><path d="M8 1h4l4 14H4z" fill="#f28425"/><path d="M7 5h6l1 3H6zM5 11h10l1 3H4z" fill="#f2f2ef"/><path d="M2 15h16l2 4H0z" fill="#f28425"/></svg></button>
    <button aria-label="Word"><svg viewBox="0 0 20 20"><path d="M9 3h10v14H9z" fill="#fff"/><path d="M1 3l10-2v18L1 17z" fill="#2b579a"/><path d="M12 6h5M12 9h5M12 12h5M12 15h5" stroke="#2b579a"/><text x="2" y="13" class="glyph">W</text></svg></button>
    <button aria-label="Excel"><svg viewBox="0 0 20 20"><path d="M9 3h10v14H9z" fill="#e9fff2" stroke="#217346"/><path d="M1 3l10-2v18L1 17z" fill="#217346"/><path d="M15 4v12" stroke="#217346"/><text x="3" y="13" class="glyph">X</text></svg></button>
    <button aria-label="Mendeley"><svg viewBox="0 0 20 20"><path d="M0 1h20v18H0z" fill="#b51e3c"/><circle cx="6" cy="7" r="2" fill="#fff"/><circle cx="10" cy="9" r="1.500" fill="#fff"/><circle cx="14" cy="7" r="2" fill="#fff"/><path d="M4 13q0-4 3-3l3 2 3-2q3-1 3 3" fill="none" stroke="#fff" stroke-width="2"/></svg></button>
    <button class="run" aria-label="PDF reader"><svg viewBox="0 0 20 20"><path d="M0 0h15l5 5v15H0z" fill="#ef8b2c"/><path d="M15 0v5h5z" fill="#654326"/><path d="M14 5c-6-3-11 5-6 8 4 2 6 0 6-4h-4" fill="none" stroke="#fff" stroke-width="2"/><path d="M6 17h8" stroke="#fff"/></svg></button>
    <button aria-label="Remote desktop"><svg viewBox="0 0 20 20"><path d="M1 1l14-1 2 12-14 1z" fill="#dbe1f0"/><path d="M2 2l12-1 2 10-12 1z" fill="#2538be"/><path d="M6 1l8 0 1 6z" fill="#6a83ec"/><path d="M7 13l-5 4 7 2z" fill="#aaa"/><circle cx="14" cy="15" r="4" fill="#ddd"/><path d="M12 15l2 2 3-4" stroke="#555" fill="none"/></svg></button>
    <button class="run current" aria-label="Creo Parametric"><svg viewBox="0 0 20 20"><path d="M1 4l3-3h15v14l-3 3H1z" fill="#a4ebf5"/><path d="M16 4l3-3v14l-3 3z" fill="#68bdcd"/><path d="M1 4l3-3h15l-3 3z" fill="#d3f7fb"/></svg></button>
    <button class="run" aria-label="Notes"><svg viewBox="0 0 20 20"><path d="M7 2l12 2-5 14-13-3z" fill="#cde7e5"/><path d="M8 3l8 2-5 12-9-3z" fill="#65a8a7"/><path d="M14 6l4 2-3 10-4-2z" fill="#e2f1ef"/></svg></button>
    <button class="run" aria-label="Recorder"><svg viewBox="0 0 20 20"><path d="M0 1h20v13H0z" fill="#c48ab5"/><path d="M1 2h18v11H1z" fill="#8f2b68"/><path d="M7 7h6v4H7zM14 8l3-2v5z" fill="#fff"/><circle cx="8" cy="5" r="1.500" fill="#fff"/><circle cx="12" cy="5" r="1.500" fill="#fff"/><path d="M9 14h2v3h4v2H5v-2h4z" fill="#fff"/><path d="M1 2h4l-4 5z" fill="#328b49"/></svg></button>
    <button class="run" aria-label="Movies"><svg viewBox="0 0 20 20"><path d="M1 8h18v11H1z" fill="#fff"/><path d="M0 3l17-3 1 4L1 7z" fill="#fff"/><path d="M4 1l3 5M9 0l3 5M14 0l3 4" stroke="#05070b" stroke-width="1.500"/></svg></button>
    <button class="run" aria-label="Recorder session"><svg viewBox="0 0 20 20"><path d="M0 1h20v13H0z" fill="#c48ab5"/><path d="M1 2h18v11H1z" fill="#8f2b68"/><path d="M7 7h6v4H7zM14 8l3-2v5z" fill="#fff"/><circle cx="8" cy="5" r="1.500" fill="#fff"/><circle cx="12" cy="5" r="1.500" fill="#fff"/><path d="M9 14h2v3h4v2H5v-2h4z" fill="#fff"/><circle cx="4" cy="5" r="3" fill="#ed3748"/></svg></button>
  </div>
  <div class="tray">
    <button class="people" aria-label="People"><svg class="i14" viewBox="0 0 16 16"><circle cx="5" cy="8" r="2.500"/><circle cx="11" cy="4" r="2.500"/><path d="M1 15c0-5 7-5 7 0M9 8c3-2 6 0 6 3"/></svg></button>
    <button aria-label="Hidden icons"><svg class="i14" viewBox="0 0 16 16"><path d="M3 10l5-5 5 5"/></svg></button>
    <button aria-label="Battery"><svg class="i14" viewBox="0 0 16 16"><path d="M1 5h12v7H1zM14 7v3" fill="#fff"/></svg></button>
    <button aria-label="Wireless"><svg class="i14" viewBox="0 0 16 16"><path d="M2 13C2 6 8 2 14 3M5 14c0-5 4-8 9-7M8 14c0-3 3-4 6-4"/><circle cx="12" cy="13" r="1" fill="#fff"/></svg></button>
    <button aria-label="Volume"><svg class="i14" viewBox="0 0 16 16"><path d="M1 6h3l3-3v10l-3-3H1zM9 6c2 1 2 3 0 4M11 4c3 2 3 6 0 8M13 2c4 3 4 9 0 12"/></svg></button>
    <time datetime="2019-03-13T06:50">6:50 AM<br>3/13/2019</time>
    <button class="note" aria-label="2 notifications"><svg class="i16" viewBox="0 0 16 16"><path d="M1 1h14v11H7l-3 3v-3H1z" fill="#fff" stroke="none"/><path d="M3 4h10M3 6h10M3 9h7" stroke="#333"/></svg><span>2</span></button>
  </div>
</nav>
</body>
</html>
```
FILE: styles.css
```css
* { box-sizing: border-box; }
body {
  margin: 0;
  min-height: 100vh;
  display: flex;
  flex-direction: column;
  background: #ebecef;
  color: #555;
  font: 10px/16px "Open Sans", "Noto Sans", sans-serif;
}
button {
  display: flex;
  align-items: center;
  justify-content: center;
  padding: 0;
  border: 0;
  background: none;
  color: inherit;
  font: inherit;
  white-space: nowrap;
}
svg { flex: none; overflow: visible; }
h1, h2 { margin: 0; }
.sprite { position: absolute; width: 0; height: 0; }
.i8 { width: 8px; height: 8px; }
.i10 { width: 10px; height: 10px; }
.i12 { width: 12px; height: 12px; }
.i14 { width: 14px; height: 14px; }
.i16 { width: 16px; height: 16px; }
.i26 { width: 26px; height: 26px; }
.flip { transform: scaleX(-1); }
.faded { opacity: .45; }
.caret {
  flex: none;
  width: 6px;
  height: 4px;
  background: #555;
  clip-path: polygon(0 0, 100% 0, 50% 100%);
}
.rule { width: 1px; height: 18px; background: #bdbdc0; }

.titlebar {
  display: grid;
  grid-template-columns: 1fr auto 1fr;
  align-items: center;
  height: 25px;
  background: linear-gradient(90deg, #e2dfe2, #dfe0dc 60%, #dfe1d9);
}
.titlebar h1 { font-family: "Noto Sans", sans-serif; font-size: 11px; font-weight: 400; color: #444; }
.quick { display: flex; align-items: center; gap: 6px; padding-left: 8px; }
.winctl { display: flex; justify-content: flex-end; gap: 10px; padding-right: 7px; }

.tabs {
  display: flex;
  height: 22px;
  font-size: 12px;
  color: #666;
  background: #e0e0e2;
}
.tabs > button { background: #cdcfd1; border-right: 1px solid #d5d6d8; }
.tabs .file { width: 59px; background: #6e6e6e; color: #f3f3f3; }
.tabs .active { width: 67px; background: #f8f8f9; color: #444; }
.t-analysis { width: 74px; }
.t-live { width: 113px; }
.t-annotate { width: 80px; }
.t-tools { width: 60px; }
.t-view { width: 58px; }
.t-flex { width: 125px; }
.t-apps { width: 97px; }
.help { display: flex; align-items: center; gap: 6px; margin-left: auto; padding: 0 3px 4px 0; color: #333; }
.qmark { width: 13px; height: 13px; margin-left: 1px; border-radius: 50%; background: #333; color: #fff; font-weight: 700; }

.ribbon { display: flex; height: 91px; background: #f7f7f8; border-bottom: 1px solid #a7a8aa; }
.group { display: flex; flex-direction: column; border-right: 1px solid #d5d5d8; flex: none; }
.rest { flex: 1 1 0; border: 0; }
.cmds { display: grid; flex: 1; }
.g-oper { width: 126px; }
.g-oper .cmds { grid-template-columns: 62px 1fr; }
.g-data { width: 122px; }
.g-data .cmds { padding-left: 5px; }
.g-datum { width: 180px; }
.g-datum .cmds { grid-template-columns: 38px minmax(0, 1fr) 40px; }
.g-shapes { width: 124px; }
.g-shapes .cmds { grid-template-columns: 44px 1fr; }
.g-eng { width: 133px; }
.g-eng .cmds { grid-template-columns: 72px 1fr; padding-left: 4px; }
.g-edit { width: 212px; }
.g-edit .cmds { grid-template-columns: 43px 52px 61px minmax(0, 1fr); }
.g-surf { width: 116px; }
.g-surf .cmds { grid-template-columns: 53px 1fr; }
.g-intent { width: 74px; }
.col { display: flex; flex-direction: column; }
.col button { height: 23px; justify-content: flex-start; gap: 3px; }
.col .caret { margin-left: 3px; }
.big { flex-direction: column; justify-content: flex-start; padding-top: 5px; }
.big span { margin-top: 8px; line-height: 13px; text-align: center; }
.big .caret { margin-top: 4px; }
.off { color: #b9b9bb; }
.off .caret { opacity: .5; }
.label { height: 20px; gap: 4px; background: #efeff0; }
.g-edit .label { background: #e8ebf1; }

main { display: flex; flex: 1; min-height: 518px; }
aside {
  display: flex;
  flex-direction: column;
  width: 292px;
  flex: none;
  border-right: 2px solid #b2b4b7;
  background: #e9ebef;
}
.sidetabs { display: flex; height: 24px; padding-top: 1px; background: #c8c8ca; color: #777; }
.sidetabs button { width: 71px; gap: 5px; background: #dcdcde; border-right: 1px solid #bdbdbf; }
.sidetabs button:nth-child(2) { width: 99px; }
.sidetabs .on { width: 82px; background: #e9ebef; border: 0; color: #555; }
.sidehead { display: flex; align-items: center; height: 24px; gap: 6px; padding: 0 8px 0 24px; }
.sidehead h2 { flex: 1; font-size: 10px; color: #444; }
.sidehead .hide { margin-left: 5px; }
.find { display: flex; align-items: center; height: 22px; padding: 0 9px; }
.field { display: flex; flex: 1; margin: 0 6px 0 3px; height: 22px; background: #fff; border: 1px solid #d2d3d6; }
.field input { flex: 1; min-width: 0; border: 0; background: none; font: inherit; }
.field button { width: 14px; }
.plus { margin-left: 8px; }
.treelist {
  flex: 1;
  margin: 4px 4px 2px 6px;
  padding: 1px 0 0;
  list-style: none;
  background: #fcfcfb;
  font-size: 9px;
}
.treelist li { display: flex; align-items: center; gap: 3px; height: 16px; padding-left: 20px; position: relative; }
.treelist li svg { width: 12px; }
.treelist .root { padding-left: 3px; gap: 4px; }
.treelist span { padding: 0 1px; line-height: 14px; }
.treelist .sel span { background: #acdff3; color: #333; }
.exp { position: absolute; left: 7px; width: 6px; height: 8px; background: #777; clip-path: polygon(0 0, 100% 50%, 0 100%); }

.canvas { position: relative; flex: 1; min-width: 0; background: linear-gradient(#e9eaea, #e6e7ee 40%, #e6e7ed 85%, #e9e9ea); }
.model { display: block; width: 100%; height: 100%; }
.viewtools {
  position: absolute;
  top: 5px;
  left: 50%;
  transform: translateX(-50%);
  display: flex;
  justify-content: space-between;
  width: 306px;
  padding: 1px;
  background: #f5f5f6;
  border: 1px solid #d4d5d7;
}
.viewtools button { width: 20px; height: 20px; }
.down, .viewtools .down { background: #dedede; border: 1px solid #bebebe; }

.status { display: flex; align-items: center; gap: 3px; height: 31px; padding: 1px 15px 0 5px; border-top: 2px solid #b5b5b7; background: #ebecef; }
.status > button { width: 17px; height: 18px; }
.status .rule { margin-left: 3px; }
.status .tall { height: 25px; margin-right: 29px; }
.spacer { flex: 1; }
.finder { display: flex; align-items: center; height: 25px; padding: 0 1px; border: solid #c4c4c7; border-width: 0 1px; }
.finder button { width: 12px; height: 20px; background: #fafafa; border: 1px solid #cacacc; border-left: 0; }
.finder button:first-child { width: 22px; border-left: 1px solid #cacacc; }
.count { width: 73px; }
.pick { position: relative; width: 144px; height: 19px; }
.pick select { width: 100%; height: 100%; padding: 0 4px; appearance: none; border: 1px solid #bbb; border-radius: 0; background: #f8f8f8; color: #666; font: inherit; }
.pick .caret { position: absolute; right: 4px; top: 8px; }
.pick::after { content: ""; position: absolute; right: 13px; top: 1px; bottom: 1px; border-left: 1px solid #ccc; }

.taskbar { display: flex; height: 33px; background: #05080e; color: #e9e9e9; }
.apps { display: grid; grid-template-columns: repeat(21, 1fr); width: 866px; }
.apps button { border-bottom: 2px solid transparent; }
.apps svg { width: 20px; height: 20px; }
.apps .run { margin: 0 4px; border-color: #76b5df; }
.apps .current { margin: 0; background: #43484e; }
.glyph { fill: #fff; font: 700 9px "Open Sans", sans-serif; }
.tray { display: flex; align-items: center; gap: 6px; margin-left: auto; padding-right: 10px; font-family: "Noto Sans", sans-serif; }
.tray svg { fill: none; stroke: #ddd; }
.people { margin-right: 9px; }
.tray time { width: 52px; text-align: center; font-size: 10px; line-height: 15px; }
.note { position: relative; width: 26px; margin-left: 4px; }
.note span { position: absolute; left: 12px; top: 6px; width: 13px; height: 13px; border-radius: 50%; background: #34373b; line-height: 13px; font-size: 9px; }
```
